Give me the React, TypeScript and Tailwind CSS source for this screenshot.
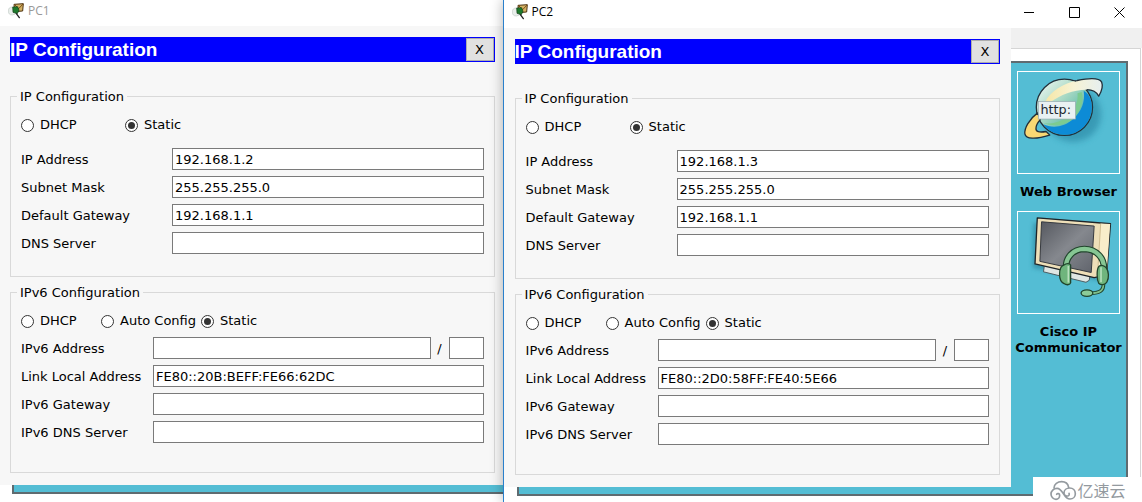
import { useId } from "react";
import type { ReactNode } from "react";

interface PcConfig {
  name: string;
  ip: string;
  mask: string;
  gateway: string;
  linkLocal: string;
}

const pc1: PcConfig = {
  name: "PC1",
  ip: "192.168.1.2",
  mask: "255.255.255.0",
  gateway: "192.168.1.1",
  linkLocal: "FE80::20B:BEFF:FE66:62DC",
};

const pc2: PcConfig = {
  name: "PC2",
  ip: "192.168.1.3",
  mask: "255.255.255.0",
  gateway: "192.168.1.1",
  linkLocal: "FE80::2D0:58FF:FE40:5E66",
};

const inputClass =
  "h-[22px] min-w-0 border border-[#7a7a7a] bg-white px-[2px] text-[13px] text-black outline-none";

/* icons */

function PacketTracerIcon() {
  return (
    <svg viewBox="0 0 48 48" className="size-4" aria-hidden="true">
      <circle cx="13" cy="24" r="12" fill="#e9eeeb" stroke="#c3cbc7" strokeWidth="2" />
      <path d="M18 4 46 2 44 24 20 26Z" fill="#d3b163" stroke="#4d3312" strokeWidth="3" />
      <path d="m20 5 12 12L45 3" fill="none" stroke="#7c4f17" strokeWidth="3" />
      <path d="M14 12 29 11 33 22 28 32 15 28Z" fill="#1d7a2c" stroke="#123c17" strokeWidth="2" />
      <path d="m25 32 9 12" stroke="#222" strokeWidth="4" strokeLinecap="round" />
    </svg>
  );
}

function BrowserIcon() {
  return (
    <svg viewBox="37 33 309 309" className="size-full" aria-hidden="true">
      <defs>
        <linearGradient id="globe" x1="0" y1="0" x2="1" y2="1">
          <stop offset="0.1" stopColor="#e4f3ec" />
          <stop offset="0.4" stopColor="#a9d9c4" />
          <stop offset="0.75" stopColor="#4fb5a5" />
        </linearGradient>
        <linearGradient id="swoosh" x1="0" y1="0" x2="1" y2="0">
          <stop offset="0" stopColor="#f6e6a6" />
          <stop offset="0.5" stopColor="#f7f3d4" />
          <stop offset="1" stopColor="#e6eff0" />
        </linearGradient>
        <filter id="soft" x="-30%" y="-30%" width="160%" height="160%">
          <feGaussianBlur stdDeviation="9" />
        </filter>
      </defs>
      <ellipse cx="205" cy="163" rx="86" ry="84" fill="#2583a0" opacity="0.6" filter="url(#soft)" />
      <circle cx="179" cy="141" r="86" fill="url(#globe)" stroke="#22303a" strokeWidth="4" />
      <path d="M238 90c22 12 27 38 24 62-6 45-45 75-86 73-26-1-49-13-62-32 30 14 66 8 92-16 26-25 37-54 32-87Z" fill="#0d8bd6" />
      <path d="M232 94c8 30-5 67-34 88-25 16-55 17-82 8 25 2 53-4 74-22 22-20 32-45 29-70Z" fill="#7ccb90" />
      <path d="M97 158c-27 20-41 48-39 64 3 16 32 18 76 4l-11-11c-22 4-32 0-31-10 0-8 6-18 13-26Z" fill="#f9d873" stroke="#22303a" strokeWidth="4" strokeLinejoin="round" />
      <path d="M120 124c16-31 56-57 98-65 35-7 68-8 75 5 5 12-1 29-9 43-7-14-17-20-35-20-40-1-82 15-112 38Z" fill="url(#swoosh)" />
      <path d="M210 61c3-1 5-1 8-2 35-7 68-8 75 5 5 12-1 29-9 43-7-14-17-20-37-20" fill="none" stroke="#22303a" strokeWidth="4" strokeLinejoin="round" />
      <rect x="99" y="123" width="114" height="54" fill="#e9f1f2" stroke="#8fa6ab" strokeWidth="2" />
      <text x="106" y="161" fontSize="39" fontWeight="400" fill="#202830" fontFamily="'DejaVu Sans', sans-serif">
        http:
      </text>
    </svg>
  );
}

function CommunicatorIcon() {
  return (
    <svg viewBox="37 19 309 309" className="size-full" aria-hidden="true">
      <defs>
        <linearGradient id="screen" x1="0" y1="0" x2="1" y2="1">
          <stop offset="0" stopColor="#55585f" />
          <stop offset="0.5" stopColor="#85888e" />
          <stop offset="1" stopColor="#5f636b" />
        </linearGradient>
        <filter id="shade" x="-20%" y="-20%" width="140%" height="140%">
          <feGaussianBlur stdDeviation="6" />
        </filter>
      </defs>
      <path d="m84 52 215 20-5 158-212-40Z" fill="#2b7f98" opacity="0.6" filter="url(#shade)" />
      <path d="m118 180-3 22 130 32 10-6 2-16Z" fill="#dfe6e3" stroke="#4c5c60" strokeWidth="3" strokeLinejoin="round" />
      <path d="m96 37 224 18-12 157-38 8-181-42Z" fill="#eedfb8" stroke="#1e2428" strokeWidth="4" strokeLinejoin="round" />
      <path d="m290 54 29 2-11 155-28 6Z" fill="#f8edca" />
      <path d="m290 54-10 163" stroke="#bda878" strokeWidth="2" />
      <path d="m109 49 161 13-9 142-157-34Z" fill="url(#screen)" stroke="#34383e" strokeWidth="3" />
      {/* headset */}
      <path d="M184 190c-2-30 20-58 56-58 36 1 61 26 60 60" fill="none" stroke="#21452c" strokeWidth="20" />
      <path d="M184 190c-2-30 20-58 56-58 36 1 61 26 60 60" fill="none" stroke="#86c693" strokeWidth="13" />
      <path d="M298 235c3 24-10 34-45 32" fill="none" stroke="#21452c" strokeWidth="11" />
      <path d="M298 235c3 24-10 34-45 32" fill="none" stroke="#7fc08c" strokeWidth="5" />
      <path d="M178 181c-18 6-19 48 0 57 6 5 18 5 20-2v-55c-3-6-14-5-20 0Z" fill="#6fb57d" stroke="#21452c" strokeWidth="4" />
      <path d="M191 184v51" stroke="#b8e0bd" strokeWidth="5" />
      <path d="M284 186c-7 10-6 40 0 51 7 7 20 5 25-4 7-12 6-32-2-43-5-8-16-10-23-4Z" fill="#6fb57d" stroke="#21452c" strokeWidth="4" />
      <path d="M291 188v46" stroke="#b8e0bd" strokeWidth="5" />
      <ellipse cx="248" cy="267" rx="18" ry="10" fill="#8ccb98" stroke="#21452c" strokeWidth="4" />
    </svg>
  );
}

function CloudLogo() {
  return (
    <svg viewBox="150 114 84 66" className="h-[22px] w-7" fill="none" stroke="#949a9f" strokeWidth="5" strokeLinecap="round" aria-hidden="true">
      <path d="M165 141c0-12 11-19 23-19 11 0 19 7 21 17" />
      <path d="M173 160c2-4 9-3 9 3 0 7-5 12-11 12-8 0-15-7-15-16s8-17 18-17c19 0 19 32 39 32 9 0 16-7 16-16 0-10-7-17-17-17-9 0-17 6-17 15 0 6 5 10 10 9 5 0 7-5 5-8" />
    </svg>
  );
}

/* form parts */

function Radio({ name, label, checked = false }: { name: string; label: string; checked?: boolean }) {
  return (
    <label className="flex items-center gap-[6px] whitespace-nowrap">
      <input
        type="radio"
        name={name}
        defaultChecked={checked}
        className="grid size-[13px] shrink-0 appearance-none place-items-center rounded-full border border-[#333] bg-white checked:before:size-[7px] checked:before:rounded-full checked:before:bg-[#333] checked:before:content-['']"
      />
      {label}
    </label>
  );
}

function Group({ title, children }: { title: string; children: ReactNode }) {
  return (
    <fieldset className="min-w-0 border border-[#d9d9d9] px-[10px] pt-[11px]">
      <legend className="-ml-1 h-[18px] px-[3px] leading-5">{title}</legend>
      {children}
    </fieldset>
  );
}

function Field({ label, value = "", wide = false }: { label: string; value?: string; wide?: boolean }) {
  const id = useId();
  return (
    <div className="flex items-center">
      <label htmlFor={id} className={wide ? "w-[151px] shrink-0 pt-[2px]" : "w-[132px] shrink-0 pt-[2px] whitespace-nowrap"}>
        {label}
      </label>
      <input id={id} type="text" defaultValue={value} className={`${inputClass} flex-1`} />
    </div>
  );
}

function IpForm({ pc }: { pc: PcConfig }) {
  const id = useId();
  return (
    <>
      <div className="flex h-[25px] items-center bg-[#0000fe]">
        <h1 className="flex-1 font-['Liberation_Sans',Arial,sans-serif] text-[19px] font-bold text-white">
          IP Configuration
        </h1>
        <button className="mr-px h-[23px] w-7 border border-[#adadad] bg-[#e1e1e1] text-[13px]">X</button>
      </div>

      <form className="flex flex-col gap-[6px] pt-[25px]">
        <Group title="IP Configuration">
          <div className="mb-[14px] grid h-[18px] grid-cols-[104px_auto] justify-start">
            <Radio name={`${id}-v4`} label="DHCP" />
            <Radio name={`${id}-v4`} label="Static" checked />
          </div>
          <div className="flex flex-col gap-[6px] pb-[22px]">
            <Field wide label="IP Address" value={pc.ip} />
            <Field wide label="Subnet Mask" value={pc.mask} />
            <Field wide label="Default Gateway" value={pc.gateway} />
            <Field wide label="DNS Server" />
          </div>
        </Group>

        <Group title="IPv6 Configuration">
          <div className="mb-[7px] grid h-[18px] grid-cols-[80px_100px_auto] justify-start">
            <Radio name={`${id}-v6`} label="DHCP" />
            <Radio name={`${id}-v6`} label="Auto Config" />
            <Radio name={`${id}-v6`} label="Static" checked />
          </div>
          <div className="flex flex-col gap-[6px] pb-[29px]">
            <div className="flex items-center">
              <label htmlFor={`${id}-addr`} className="w-[132px] shrink-0 pt-[2px]">
                IPv6 Address
              </label>
              <input id={`${id}-addr`} type="text" className={`${inputClass} flex-1`} />
              <label htmlFor={`${id}-prefix`} className="w-[18px] pt-[2px] text-center">
                /
              </label>
              <input id={`${id}-prefix`} type="text" className={`${inputClass} w-[35px]`} />
            </div>
            <Field label="Link Local Address" value={pc.linkLocal} />
            <Field label="IPv6 Gateway" />
            <Field label="IPv6 DNS Server" />
          </div>
        </Group>
      </form>
    </>
  );
}

function WindowTitle({ name }: { name: string }) {
  return (
    <div className="flex flex-1 items-center gap-1 px-2 pb-1 font-['Open_Sans','Noto_Sans',sans-serif] text-xs">
      <PacketTracerIcon />
      {name}
    </div>
  );
}

function DesktopApp({ label, children }: { label: string; children: ReactNode }) {
  return (
    <a href="#" className="flex flex-col items-center text-center font-bold leading-4">
      <span className="size-[103px] border border-white">{children}</span>
      <span className="mt-[10px]">{label}</span>
    </a>
  );
}

export default function App() {
  return (
    <div className="relative flex min-h-screen overflow-hidden bg-white font-['DejaVu_Sans',Verdana,sans-serif] text-[13px] leading-[18px] text-black">
      {/* PC1, behind */}
      <section className="min-w-0 flex-[503]">
        <header className="flex h-[26px] text-[#999]">
          <WindowTitle name={pc1.name} />
        </header>
        <div className="bg-[#f7f7f7] pt-[11px] pr-2 pb-3 pl-[10px]">
          <IpForm pc={pc1} />
        </div>
        <div className="ml-3 h-[9px] border-b-2 border-l-2 border-[#5f6b70] bg-[#54bdd4]" />
      </section>

      {/* PC2, in front */}
      <section className="min-w-0 flex-[639] border-l border-[#2a80cc] bg-white shadow-[0_0_12px_rgba(0,0,0,0.3)]">
        <header className="flex h-7">
          <WindowTitle name={pc2.name} />
          <button aria-label="Minimize" className="grid h-6 w-[45px] place-items-center">
            <svg width="11" height="11" stroke="#000"><path d="M0 5.500h10" /></svg>
          </button>
          <button aria-label="Maximize" className="grid h-6 w-[45px] place-items-center">
            <svg width="11" height="11" fill="none" stroke="#000"><path d="M.5.5h10v10H.5z" /></svg>
          </button>
          <button aria-label="Close" className="grid h-6 w-[45px] place-items-center">
            <svg width="11" height="11" stroke="#000"><path d="m.5.5 10 10m0-10-10 10" /></svg>
          </button>
        </header>

        <div className="flex">
          <div className="min-w-0 flex-1">
            <div className="bg-[#f7f7f7] px-[11px] pt-[11px] pb-3">
              <IpForm pc={pc2} />
            </div>
            <div className="ml-[13px] h-[9px] border-b-2 border-l-2 border-[#5f6b70] bg-[#54bdd4]" />
          </div>

          {/* desktop apps */}
          <aside className="flex w-[131px] flex-col">
            <div className="h-5 bg-[#f0f0f0]" />
            <div className="mr-px flex flex-1 flex-col border-t border-r border-[#d5d5d5] pt-3 pr-3">
              <nav className="flex flex-1 flex-col gap-[11px] border-t-2 border-r-2 border-b-2 border-[#5f6b70] bg-[#54bdd4] pt-2">
                <DesktopApp label="Web Browser">
                  <BrowserIcon />
                </DesktopApp>
                <DesktopApp label="Cisco IP Communicator">
                  <CommunicatorIcon />
                </DesktopApp>
              </nav>
            </div>
          </aside>
        </div>
      </section>

      {/* watermark */}
      <div className="absolute right-0 bottom-0 flex h-[25px] w-[109px] items-center justify-center bg-white font-['Noto_Sans_CJK_SC',sans-serif] text-base text-[#949a9f]">
        <CloudLogo />
        亿速云
      </div>
    </div>
  );
}
